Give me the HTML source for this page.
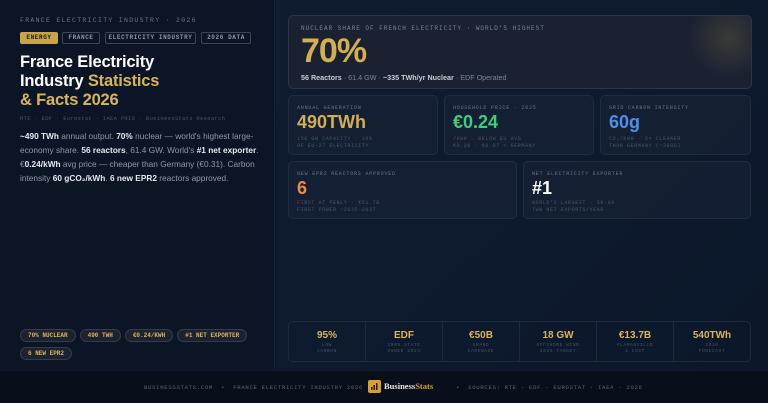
<!DOCTYPE html>
<html><head><meta charset="utf-8"><style>
*{margin:0;padding:0;box-sizing:border-box}
body{width:768px;height:403px;overflow:hidden;background:#0c1628;font-family:"Liberation Sans",sans-serif;position:relative}
.mono{font-family:"Liberation Mono",monospace}
.left{position:absolute;left:0;top:0;width:275px;height:370px;background:#0b1526;border-right:1px solid #16223a}
.right{position:absolute;left:276px;top:0;width:492px;height:370px;background:linear-gradient(135deg,#0f1c30,#0c172a)}
.lbl{position:absolute;left:20px;top:17px;font-size:6.5px;letter-spacing:1.3px;color:#6b7688;white-space:nowrap}
.tag{position:absolute;top:32px;font-size:6px;letter-spacing:.6px;color:#8c96a6;border:1px solid #3a4557;border-radius:2px;height:12px;line-height:10px;text-align:center;font-weight:bold;white-space:nowrap}
.tag.g{background:#c9a54a;color:#1a1a10;border-color:#c9a54a}
h1{position:absolute;left:20px;top:53px;font-size:16.5px;line-height:19px;color:#fff;font-weight:bold;letter-spacing:-.2px}
h1 span{color:#d9b45a}
.src{position:absolute;left:20px;top:115px;font-size:5.5px;color:#4a5466;letter-spacing:.3px;white-space:nowrap}
.p{position:absolute;left:20px;top:129px;width:250px;font-size:8.3px;line-height:14px;color:#8e98a8}
.p b{color:#e6e9ee}
.pills{position:absolute;left:20px;top:329px;width:240px;display:flex;flex-wrap:wrap;gap:5px 4px}
.pill{font-size:6px;font-weight:bold;color:#d9b45a;background:#1c2230;border:1px solid #363d4a;border-radius:7px;height:13px;line-height:11px;padding:0 7px;white-space:nowrap}
.card{position:absolute;border:1px solid #202c40;border-radius:5px;background:rgba(22,33,52,.8)}
.card .t{position:absolute;left:8px;top:9px;font-size:5px;letter-spacing:.8px;color:#6b7585;white-space:nowrap}
.card .v{position:absolute;left:8px;top:16px;font-size:18px;font-weight:bold}
.card .s{position:absolute;left:8px;top:40px;font-size:5px;line-height:7px;letter-spacing:.6px;color:#4a5466;white-space:nowrap}
.hero{left:288px;top:15px;width:464px;height:74px;background:radial-gradient(circle at 440px 22px,rgba(200,170,80,.18),rgba(0,0,0,0) 40px),#1a2232;border-color:#2e3444}
.strip{position:absolute;left:288px;top:321px;width:463px;height:41px;border:1px solid #1e2a3e;border-radius:5px;display:flex}
.cell{flex:1;border-right:1px solid #1e2a3e;text-align:center;padding-top:8px}
.cell:last-child{border:none}
.cell .n{font-size:10px;font-weight:bold;color:#d9b45a}
.cell .d{font-size:4.5px;line-height:6px;color:#4a5466;letter-spacing:.6px;margin-top:2px;white-space:nowrap}
.foot{position:absolute;left:0;top:370px;width:768px;height:33px;background:#080f1b;border-top:1px solid #111b2b}
.foot .m{position:absolute;top:13px;font-size:5.6px;letter-spacing:.7px;color:#5a6474;white-space:nowrap}
</style></head><body>
<div class="left">
<div class="lbl mono">FRANCE ELECTRICITY INDUSTRY · 2026</div>
<div class="tag g mono" style="left:20px;width:38px">ENERGY</div>
<div class="tag mono" style="left:62px;width:38px">FRANCE</div>
<div class="tag mono" style="left:105px;width:91px">ELECTRICITY INDUSTRY</div>
<div class="tag mono" style="left:201px;width:50px">2026 DATA</div>
<h1>France Electricity<br>Industry <span>Statistics<br>&amp; Facts 2026</span></h1>
<div class="src mono">RTE · EDF · Eurostat · IAEA PRIS · BusinessStats Research</div>
<div class="p"><b>~490 TWh</b> annual output. <b>70%</b> nuclear — world's highest large-economy share. <b>56 reactors</b>, 61.4 GW. World's <b>#1 net exporter</b>. €<b>0.24/kWh</b> avg price — cheaper than Germany (€0.31). Carbon intensity <b>60 gCO₂/kWh</b>. <b>6 new EPR2</b> reactors approved.</div>
<div class="pills mono"><div class="pill">70% NUCLEAR</div><div class="pill">490 TWH</div><div class="pill">€0.24/KWH</div><div class="pill">#1 NET EXPORTER</div><div class="pill">6 NEW EPR2</div></div>
</div>
<div class="right"></div>
<div class="card hero">
<div class="mono" style="position:absolute;left:12px;top:9px;font-size:6px;letter-spacing:1px;color:#7a8496;white-space:nowrap">NUCLEAR SHARE OF FRENCH ELECTRICITY · WORLD'S HIGHEST</div>
<div style="position:absolute;left:12px;top:16px;font-size:34px;font-weight:bold;color:#d4ae52;letter-spacing:-1px">70%</div>
<div style="position:absolute;left:12px;top:57px;font-size:7.2px;color:#7a8496;white-space:nowrap"><b style="color:#c8ccd4">56 Reactors</b> · 61.4 GW · <b style="color:#c8ccd4">~335 TWh/yr Nuclear</b> · EDF Operated</div>
</div>
<div class="card" style="left:288px;top:95px;width:150px;height:60px"><div class="t mono">ANNUAL GENERATION</div><div class="v" style="color:#d4ae52">490TWh</div><div class="s mono">150 GW CAPACITY · 10%<br>OF EU-27 ELECTRICITY</div></div>
<div class="card" style="left:444px;top:95px;width:150px;height:60px"><div class="t mono">HOUSEHOLD PRICE · 2025</div><div class="v" style="color:#3ecf7a">€0.24</div><div class="s mono">/KWH · BELOW EU AVG<br>€0.28 · €0.07 &lt; GERMANY</div></div>
<div class="card" style="left:600px;top:95px;width:151px;height:60px"><div class="t mono">GRID CARBON INTENSITY</div><div class="v" style="color:#4b8fe8">60g</div><div class="s mono">CO₂/KWH · 6× CLEANER<br>THAN GERMANY (~380G)</div></div>
<div class="card" style="left:288px;top:161px;width:229px;height:58px"><div class="t mono">NEW EPR2 REACTORS APPROVED</div><div class="v" style="color:#f08a3a">6</div><div class="s mono" style="top:38px">FIRST AT PENLY · €51.7B<br>FIRST POWER ~2035-2037</div></div>
<div class="card" style="left:523px;top:161px;width:228px;height:58px"><div class="t mono">NET ELECTRICITY EXPORTER</div><div class="v" style="color:#fff">#1</div><div class="s mono" style="top:38px">WORLD'S LARGEST · 50-80<br>TWH NET EXPORTS/YEAR</div></div>
<div class="strip">
<div class="cell"><div class="n">95%</div><div class="d mono">LOW<br>CARBON</div></div>
<div class="cell"><div class="n">EDF</div><div class="d mono">100% STATE<br>OWNED 2023</div></div>
<div class="cell"><div class="n">€50B</div><div class="d mono">GRAND<br>CARENAGE</div></div>
<div class="cell"><div class="n">18 GW</div><div class="d mono">OFFSHORE WIND<br>2035 TARGET</div></div>
<div class="cell"><div class="n">€13.7B</div><div class="d mono">FLAMANVILLE<br>3 COST</div></div>
<div class="cell"><div class="n">540TWh</div><div class="d mono">2030<br>FORECAST</div></div>
</div>
<div class="foot">
<div class="m mono" style="left:144px">BUSINESSSTATS.COM &nbsp;•&nbsp; FRANCE ELECTRICITY INDUSTRY 2026 &nbsp;•</div>
<div style="position:absolute;left:368px;top:9px;width:13px;height:13px;background:#d9a030;border-radius:2px"><svg width="13" height="13"><rect x="3" y="7" width="1.5" height="3" fill="#2a1a00"/><rect x="5.5" y="5" width="1.5" height="5" fill="#2a1a00"/><rect x="8" y="3" width="1.5" height="7" fill="#2a1a00"/></svg></div>
<div style="position:absolute;left:384px;top:10px;font-family:'Liberation Serif',serif;font-weight:bold;font-size:8.5px;color:#e6e6e6">Business<span style="color:#d9a030">Stats</span></div>
<div class="m mono" style="left:456px">• &nbsp;SOURCES: RTE · EDF · EUROSTAT · IAEA · 2026</div>
</div>
</body></html>
